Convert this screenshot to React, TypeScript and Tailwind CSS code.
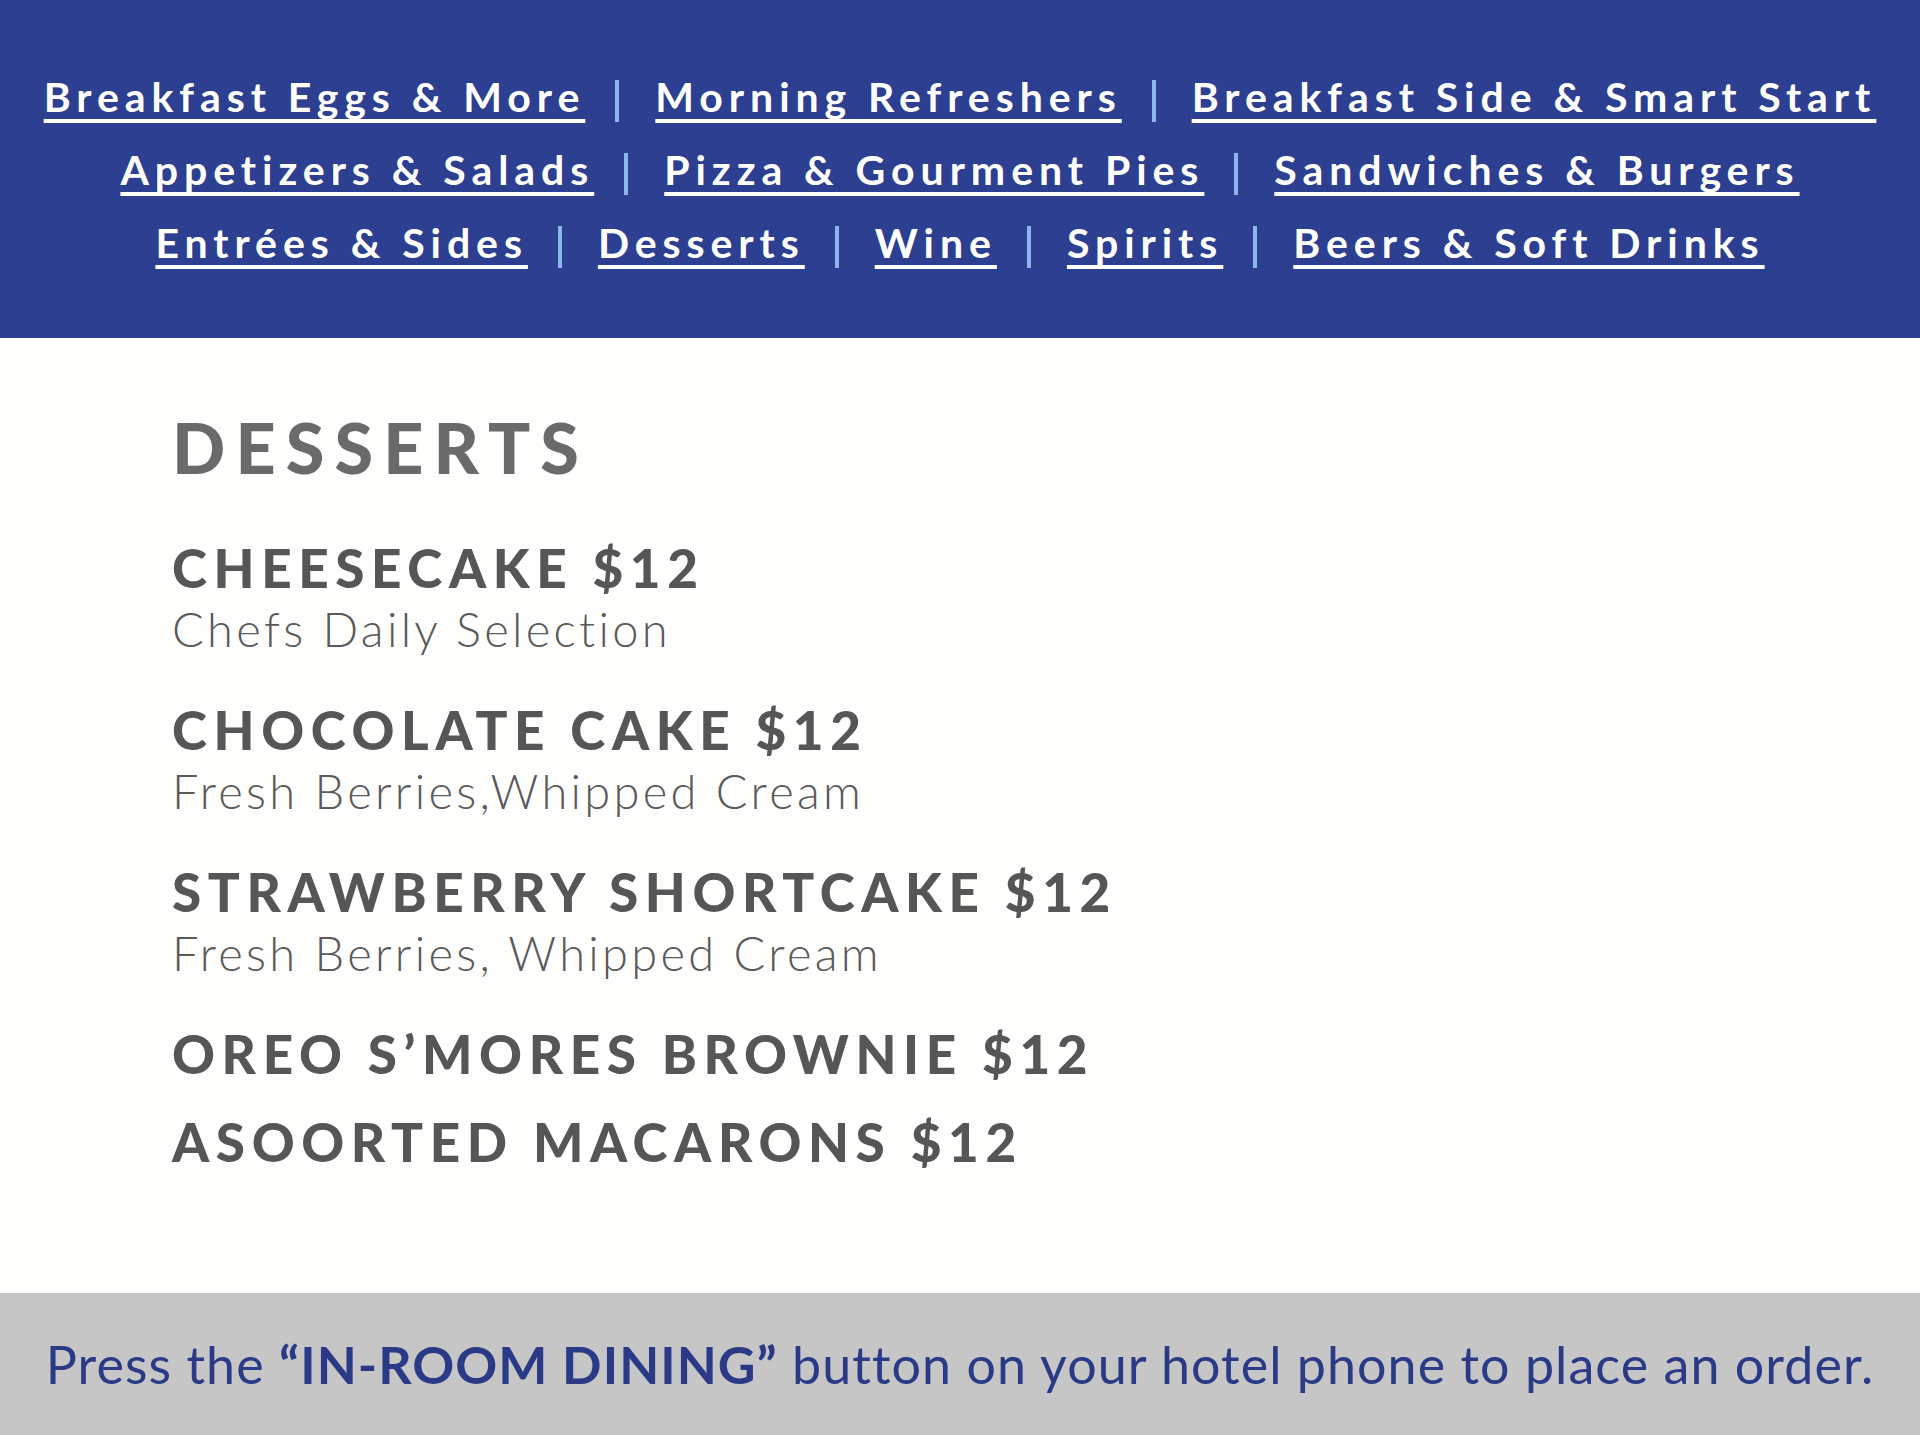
const navRows: string[][] = [
  ["Breakfast Eggs & More", "Morning Refreshers", "Breakfast Side & Smart Start"],
  ["Appetizers & Salads", "Pizza & Gourment Pies", "Sandwiches & Burgers"],
  ["Entrées & Sides", "Desserts", "Wine", "Spirits", "Beers & Soft Drinks"],
];

const desserts = [
  { name: "CHEESECAKE $12", note: "Chefs Daily Selection" },
  { name: "CHOCOLATE CAKE $12", note: "Fresh Berries,Whipped Cream" },
  { name: "STRAWBERRY SHORTCAKE $12", note: "Fresh Berries, Whipped Cream" },
  { name: "OREO S’MORES BROWNIE $12", note: "" },
  { name: "ASOORTED MACARONS $12", note: "" },
];

export default function App() {
  return (
    <div className="w-[1920px] h-[1435px] flex flex-col bg-white font-['Lato','Liberation_Sans',sans-serif]">
      {/* Category nav */}
      <nav className="h-[338px] shrink-0 bg-[#2c3f91] pt-[60px] flex flex-col items-center">
        {navRows.map((row, r) => (
          <div key={r} className="flex items-start h-[73px]">
            {row.map((label, i) => (
              <div key={label} className="flex items-start">
                {i > 0 && <span className="mt-[20px] ml-[30px] mr-[36px] w-[4px] h-[42px] bg-[#8db7ea]" />}
                <a
                  href="#"
                  className="text-white text-[41px] leading-[73px] font-bold tracking-[0.145em] underline decoration-[4px] underline-offset-[7px] [text-decoration-skip-ink:none] whitespace-nowrap"
                >
                  {label}
                </a>
              </div>
            ))}
          </div>
        ))}
      </nav>

      {/* Menu section */}
      <main className="h-[955px] shrink-0 pl-[172px] pt-[74px] bg-[#fefefd]">
        <h1 className="text-[70px] leading-[70px] font-black tracking-[0.145em] text-[#6a6a6a]">DESSERTS</h1>
        <div className="mt-[59px] flex flex-col gap-[35px]">
          {desserts.map((d) => (
            <div key={d.name} className={d.note ? "pb-[15px]" : ""}>
              <div className="text-[53px] leading-[53px] font-black tracking-[0.125em] text-[#565656] whitespace-nowrap">
                {d.name}
              </div>
              {d.note && (
                <div className="mt-[12px] text-[47px] leading-[47px] font-light tracking-[0.07em] text-[#5a5a5a] whitespace-nowrap">
                  {d.note}
                </div>
              )}
            </div>
          ))}
        </div>
      </main>

      {/* Footer */}
      <footer className="h-[142px] shrink-0 bg-[#c6c6c6] flex items-center justify-center">
        <p className="text-[52px] tracking-[0.02em] text-[#2b3a86] whitespace-nowrap">
          Press the <span className="font-bold">“IN-ROOM DINING”</span> button on your hotel phone to place an order.
        </p>
      </footer>
    </div>
  );
}
